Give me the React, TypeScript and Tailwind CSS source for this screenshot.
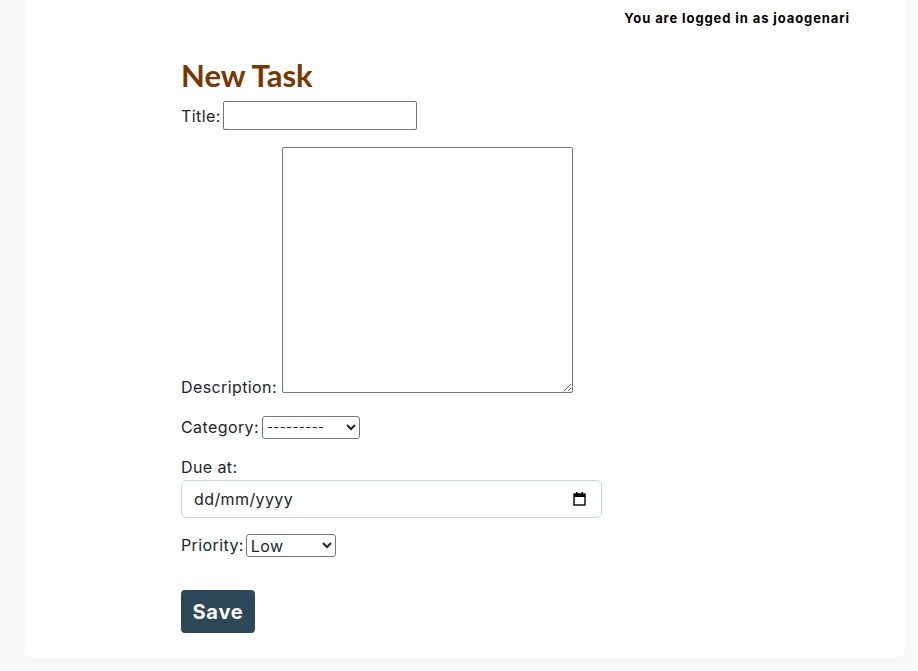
export default function App() {
    return (
        <div className="min-h-screen bg-[#f8f9fa] font-['Inter','Liberation_Sans',sans-serif] text-[#212529]">
            {/* CARD */}
            <div className="ml-[26px] w-[879px] h-[657px] bg-white rounded-b-[6px]">
                <div className="flex justify-end pr-[55px] pt-[9px] text-[13px] font-bold text-black leading-[18px] tracking-[0.9px]">
                    You are logged in as joaogenari
                </div>

                <div className="pl-[155px] pt-[30px]">
                    <h1 className="font-['Lato',sans-serif] font-bold text-[31px] leading-[36px] text-[#7a3700]">
                        New Task
                    </h1>

                    <form className="text-[16px] leading-[24px] tracking-[0.4px]">
                        {/* TITLE */}
                        <div className="mt-[8px] flex items-center gap-[2px]">
                            <label>Title:</label>
                            <input type="text" className="w-[194px] h-[29px] border border-[#767676] rounded-[2px] px-1" />
                        </div>

                        {/* DESCRIPTION */}
                        <div className="mt-[17px]">
                            <label className="mr-[5px]">Description:</label>
                            <textarea className="inline-block align-baseline w-[291px] h-[246px] border border-[#767676] rounded-[2px]" />
                        </div>

                        {/* CATEGORY */}
                        <div className="mt-[16px] flex items-center gap-[3px]">
                            <label>Category:</label>
                            <select className="w-[98px] h-[23px] border border-[#767676] rounded-[3px] text-[13px]">
                                <option>---------</option>
                            </select>
                        </div>

                        {/* DUE AT */}
                        <div className="mt-[16px]">
                            <label className="block">Due at:</label>
                            <div className="relative mt-[1px] w-[421px]">
                                <input
                                    type="text"
                                    placeholder="dd/mm/yyyy"
                                    className="w-full h-[38px] border border-[#ced4da] rounded-[5px] px-[12px] placeholder:text-[#212529]"
                                />
                                <svg className="absolute right-[16px] top-[12px]" width="13" height="14" viewBox="0 0 13 14">
                                    <rect x="1" y="2" width="11" height="11" fill="none" stroke="#000" strokeWidth="1.4" />
                                    <rect x="1" y="2" width="11" height="3" fill="#000" />
                                    <rect x="3" y="0" width="1.5" height="3" fill="#000" />
                                    <rect x="8.5" y="0" width="1.5" height="3" fill="#000" />
                                </svg>
                            </div>
                        </div>

                        {/* PRIORITY */}
                        <div className="mt-[15px] flex items-center gap-[2px]">
                            <label>Priority:</label>
                            <select className="w-[90px] h-[23px] border border-[#767676] rounded-[3px] text-[16px] leading-[20px]">
                                <option>Low</option>
                                <option>Medium</option>
                                <option>High</option>
                            </select>
                        </div>

                        <button type="button" className="mt-[33px] w-[74px] h-[43px] bg-[#2d4858] rounded-[4px] text-white font-bold text-[20px] tracking-[0.8px]">
                            Save
                        </button>
                    </form>
                </div>
            </div>
        </div>
    );
}
